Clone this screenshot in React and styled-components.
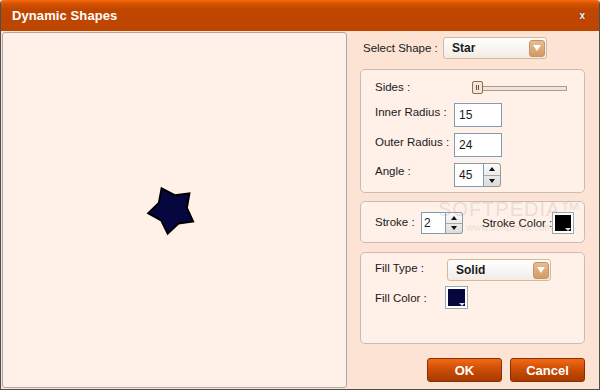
import styled, { createGlobalStyle } from "styled-components";

const Global = createGlobalStyle`
  html, body { margin: 0; padding: 0; background: #fde3d3; }
  body { font-family: "Liberation Sans", Arial, sans-serif; font-size: 12px; color: #1a1a1a; }
`;

const Window = styled.div`
  width: 600px;
  height: 390px;
  box-sizing: border-box;
  display: flex;
  flex-direction: column;
  background: #fde3d3;
  border: 1px solid #4e4e4e;
  border-top: none;
  border-radius: 4px 4px 0 0;
  overflow: hidden;
  position: relative;
`;

const TitleBar = styled.div`
  height: 31px;
  flex: none;
  display: flex;
  align-items: center;
  justify-content: space-between;
  padding: 0 14px 0 11px;
  background: linear-gradient(#f86a10 0px, #d65200 4px, #c04700 9px, #bc4500 100%);
  color: #fff;
`;

const Title = styled.span`
  font-weight: bold;
  font-size: 13px;
  letter-spacing: 0.1px;
`;

const Close = styled.span`
  font-size: 10px;
  font-weight: bold;
  text-shadow: 0 0 1px #000;
`;

const Body = styled.div`
  flex: 1;
  display: flex;
  padding: 1px 0 1px 1px;
`;

const Canvas = styled.div`
  width: 345px;
  box-sizing: border-box;
  background: #fff0e8;
  border: 1px solid #a9a9a9;
  border-radius: 3px;
  display: flex;
  align-items: flex-start;
`;

const Side = styled.div`
  flex: 1;
  display: flex;
  flex-direction: column;
  padding: 5px 13px 0 13px;
`;

const Row = styled.div`
  display: flex;
  align-items: center;
  white-space: nowrap;
`;

const Label = styled.span`
  width: ${(p) => (p.w ? `${p.w}px` : "auto")};
  flex: none;
  font-size: 11.5px;
  padding-left: ${(p) => p.pl || 0}px;
  margin-bottom: ${(p) => p.mb || 0}px;
  box-sizing: border-box;
`;

const Select = styled.div`
  width: 104px;
  height: 22px;
  box-sizing: border-box;
  border: 1px solid #d9b894;
  border-radius: 3px;
  background: linear-gradient(#ffffff, #f2ebe6);
  display: flex;
  align-items: center;
  justify-content: space-between;
  padding: 0 1px 0 8px;
  font-weight: bold;
  font-size: 12px;
`;

const Arrow = styled.div`
  width: 16px;
  height: 17px;
  border-radius: 3px;
  border: 1px solid #c39464;
  box-sizing: border-box;
  background: linear-gradient(#e8bd90, #d39a62);
  display: flex;
  align-items: center;
  justify-content: center;
  &::after {
    content: "";
    border-left: 4px solid transparent;
    border-right: 4px solid transparent;
    border-top: 6px solid #fff;
  }
`;

const Group = styled.div`
  box-sizing: border-box;
  height: ${(p) => p.h}px;
  margin-top: ${(p) => p.mt}px;
  margin-right: 1px;
  background: #fff0e8;
  border: 1px solid #c9bcb4;
  border-radius: 5px;
  display: flex;
  flex-direction: column;
  padding: ${(p) => p.pad};
  gap: ${(p) => p.gap || 0}px;
`;

const Slider = styled.div`
  position: relative;
  margin-left: 2px;
  width: 93px;
  height: 5px;
  box-sizing: border-box;
  background: #ece4de;
  border: 1px solid #b49a82;
`;

const Thumb = styled.div`
  position: absolute;
  left: -3px;
  top: -6px;
  width: 11px;
  height: 13px;
  box-sizing: border-box;
  border: 1px solid #8c6c4c;
  border-radius: 2px;
  background: #f2e6d8;
  display: flex;
  align-items: center;
  justify-content: center;
  gap: 1px;
  &::before, &::after {
    content: "";
    width: 1px;
    height: 5px;
    background: #6a4a2a;
  }
`;

const Input = styled.div`
  width: ${(p) => p.w}px;
  height: ${(p) => p.h || 24}px;
  box-sizing: border-box;
  border: 1px solid #7f9db9;
  background: #fff;
  display: flex;
  align-items: center;
  padding-left: ${(p) => p.pl || 4}px;
  font-size: 12px;
`;

const Spinner = styled.div`
  width: 17px;
  height: ${(p) => p.h || 24}px;
  box-sizing: border-box;
  border: 1px solid #9a9a9a;
  border-left: none;
  border-radius: 0 3px 3px 0;
  display: flex;
  flex-direction: column;
  background: linear-gradient(#fbfbfb, #dcdcdc);
`;

const SpinHalf = styled.div`
  flex: 1;
  display: flex;
  align-items: center;
  justify-content: center;
  & + & { border-top: 1px solid #a8a8a8; }
  &::after {
    content: "";
    border-left: 3px solid transparent;
    border-right: 3px solid transparent;
    ${(p) => (p.up ? "border-bottom: 4px solid #111;" : "border-top: 4px solid #111;")}
  }
`;

const Swatch = styled.div`
  width: ${(p) => p.s}px;
  height: ${(p) => p.s}px;
  box-sizing: border-box;
  border: 1px solid #9aa6b6;
  background: #fff;
  padding: 2px;
  position: relative;
  &::before {
    content: "";
    display: block;
    width: 100%;
    height: 100%;
    background: ${(p) => p.c};
  }
  &::after {
    content: "";
    position: absolute;
    right: 2px;
    bottom: 2px;
    border-left: 3px solid transparent;
    border-right: 3px solid transparent;
    border-top: 3px solid #ddd;
  }
`;

const Buttons = styled.div`
  display: flex;
  justify-content: flex-end;
  gap: 8px;
  margin-top: 14px;
  margin-right: 1px;
`;

const Button = styled.button`
  width: 75px;
  height: 24px;
  border: 1px solid #8a3000;
  border-radius: 3px;
  background: linear-gradient(#f36a16, #c94c04 50%, #a83a00);
  color: #fff;
  font-family: "Liberation Sans", Arial, sans-serif;
  font-weight: bold;
  font-size: 13px;
  padding: 0;
`;

const Watermark = styled.div`
  position: absolute;
  left: 437px;
  top: 199px;
  color: rgba(150, 150, 150, 0.22);
  text-align: center;
  pointer-events: none;
  font-family: "Liberation Sans", Arial, sans-serif;
  line-height: 1;
`;

const WmBig = styled.div`
  font-size: 20px;
  letter-spacing: 1px;
`;

const WmSmall = styled.div`
  font-size: 10px;
  margin-top: 4px;
`;

function starPoints(cx, cy, R, r, startDeg) {
  const pts = [];
  for (let i = 0; i < 10; i++) {
    const a = ((startDeg + i * 36) * Math.PI) / 180;
    const rad = i % 2 === 0 ? R : r;
    pts.push(`${(cx + rad * Math.cos(a)).toFixed(2)},${(cy + rad * Math.sin(a)).toFixed(2)}`);
  }
  return pts.join(" ");
}

function App() {
  return (
    <>
      <Global />
      <Window>
        <TitleBar>
          <Title>Dynamic Shapes</Title>
          <Close>x</Close>
        </TitleBar>
        <Body>
          <Canvas>
            <svg width="343" height="353" viewBox="3 33 343 353">
              <polygon
                points={starPoints(172, 210, 24, 15, -115.6)}
                fill="#07073f"
                stroke="#000"
                strokeWidth="2"
                strokeLinejoin="miter"
              />
            </svg>
          </Canvas>
          <Side>
            <Row>
              <Label w={83} pl={3}>Select Shape :</Label>
              <Select>
                Star
                <Arrow />
              </Select>
            </Row>

            <Group h={124} mt={10} pad="10px 0 0 14px" gap={6}>
              <Row style={{ height: 17 }}>
                <Label w={97} mb={3}>Sides :</Label>
                <Slider>
                  <Thumb />
                </Slider>
              </Row>
              <Row>
                <Label w={79} mb={7}>Inner Radius :</Label>
                <Input w={48}>15</Input>
              </Row>
              <Row>
                <Label w={79} mb={7}>Outer Radius :</Label>
                <Input w={48}>24</Input>
              </Row>
              <Row>
                <Label w={79} mb={8}>Angle :</Label>
                <Input w={30}>45</Input>
                <Spinner>
                  <SpinHalf up />
                  <SpinHalf />
                </Spinner>
              </Row>
            </Group>

            <Group h={42} mt={8} pad="10px 0 0 14px">
              <Row>
                <Label w={46} mb={3}>Stroke :</Label>
                <Input w={25} h={22} pl={2}>2</Input>
                <Spinner h={22}>
                  <SpinHalf up />
                  <SpinHalf />
                </Spinner>
                <Label w={89} pl={19}>Stroke Color :</Label>
                <Swatch s={22} c="#000" />
              </Row>
            </Group>

            <Group h={92} mt={9} pad="6px 0 0 14px" gap={5}>
              <Row>
                <Label w={72} mb={4}>Fill Type :</Label>
                <Select>
                  Solid
                  <Arrow />
                </Select>
              </Row>
              <Row>
                <Label w={70}>Fill Color :</Label>
                <Swatch s={23} c="#07073f" />
              </Row>
            </Group>

            <Buttons>
              <Button>OK</Button>
              <Button>Cancel</Button>
            </Buttons>
          </Side>
        </Body>
        <Watermark>
          <WmBig>SOFTPEDIA™</WmBig>
          <WmSmall>www.softpedia.com</WmSmall>
        </Watermark>
      </Window>
    </>
  );
}

export default App;
